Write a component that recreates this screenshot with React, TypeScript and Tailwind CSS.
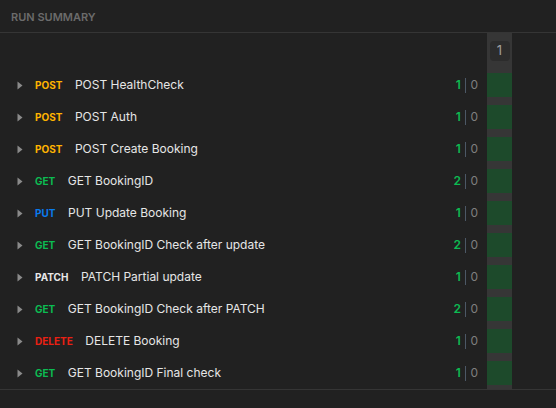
const ROWS = [
  { method: "POST", name: "POST HealthCheck", pass: 1 },
  { method: "POST", name: "POST Auth", pass: 1 },
  { method: "POST", name: "POST Create Booking", pass: 1 },
  { method: "GET", name: "GET BookingID", pass: 2 },
  { method: "PUT", name: "PUT Update Booking", pass: 1 },
  { method: "GET", name: "GET BookingID Check after update", pass: 2 },
  { method: "PATCH", name: "PATCH Partial update", pass: 1 },
  { method: "GET", name: "GET BookingID Check after PATCH", pass: 2 },
  { method: "DELETE", name: "DELETE Booking", pass: 1 },
  { method: "GET", name: "GET BookingID Final check", pass: 1 },
];

const METHOD_COLOR: Record<string, string> = {
  POST: "text-[#ffb400]",
  GET: "text-[#0cbb52]",
  PUT: "text-[#097bed]",
  PATCH: "text-[#e8e8e8]",
  DELETE: "text-[#eb2013]",
};

export default function App() {
  return (
    <div className="w-[556px] h-[408px] bg-[#212121] font-['Inter','Liberation_Sans',sans-serif] overflow-hidden">
      <div className="h-[33px] border-b border-[#353535] px-[11px] flex items-center">
        <span className="text-[11px] font-semibold text-[#6b6b6b] pt-[3px]">RUN SUMMARY</span>
      </div>

      <div className="border-b border-[#353535] w-full">
        {/* iteration header */}
        <div className="flex h-[36px]">
          <div className="flex-1" />
          <div className="w-[25px] bg-[#363636] flex justify-center pt-[8px]">
            <div className="w-[20px] h-[20px] rounded-[4px] bg-[#2c2c2c] flex items-center justify-center text-[13px] text-[#a0a0a0]">1</div>
          </div>
          <div className="w-[44px]" />
        </div>

        {ROWS.map((r, i) => (
          <div key={i} className="flex h-[32px]">
            <div className="flex-1 flex items-center pl-[17px] pr-[9px]">
              <svg width="6" height="9" viewBox="0 0 6 9" className="shrink-0">
                <path d="M0.5 0.5 L5.5 4.5 L0.5 8.5 Z" fill="#8a8a8a" />
              </svg>
              <span className={`ml-[12px] text-[10px] font-bold ${METHOD_COLOR[r.method]}`}>{r.method}</span>
              <span className="ml-[12.5px] text-[12px] text-[#e6e6e6]">{r.name}</span>
              <div className="ml-auto flex items-center text-[12px]">
                <span className="text-[#0cbb52] font-semibold">{r.pass}</span>
                <span className="mx-[4px] w-[1.5px] h-[15px] bg-[#4c5866]" />
                <span className="text-[#7f7f7f]">0</span>
              </div>
            </div>
            <div className="w-[25px] bg-[#363636] py-[4px]">
              <div className="h-full bg-[#1d4a2b]" />
            </div>
            <div className="w-[44px]" />
          </div>
        ))}
      </div>
    </div>
  );
}
